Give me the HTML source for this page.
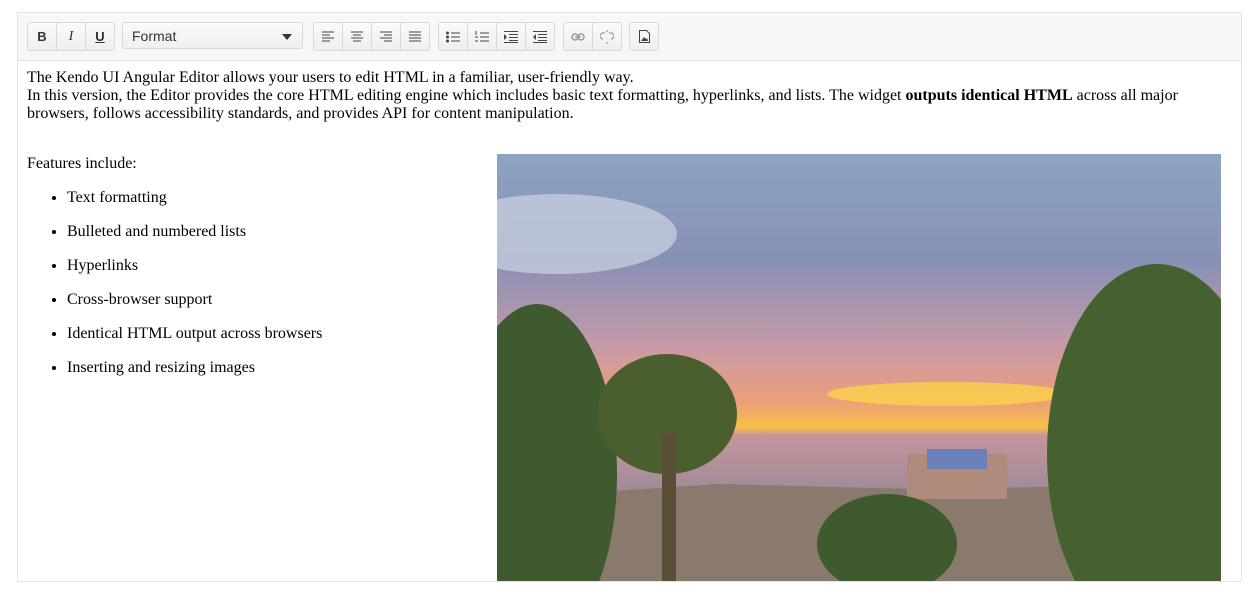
<!DOCTYPE html>
<html><head><meta charset="utf-8"><style>
html,body{margin:0;padding:0;background:#fff;width:1258px;height:596px;overflow:hidden}
.ed{position:absolute;left:17px;top:12px;width:1223px;height:568px;border:1px solid #e3e3e3;overflow:hidden}
.tb{position:absolute;left:0;top:0;width:1223px;height:47px;background:#f7f7f7;border-bottom:1px solid #e3e3e3}
.g{position:absolute;top:9px;height:27px;border:1px solid #d8d8d8;border-radius:3px;background:linear-gradient(#fafafa,#efefef);display:flex}
.g span{width:28px;height:27px;border-right:1px solid #d8d8d8;display:flex;align-items:center;justify-content:center;font:bold 13px "Liberation Sans",sans-serif;color:#333}
.g span:last-child{border-right:none}
.fmt{position:absolute;left:104px;top:9px;width:181px;height:27px;border:1px solid #d8d8d8;border-radius:3px;background:linear-gradient(#fafafa,#efefef);font:14px "Liberation Sans",sans-serif;color:#333;line-height:27px;padding-left:9px;box-sizing:border-box}
.fmt:after{content:"";position:absolute;right:10px;top:11px;border:5px solid transparent;border-top:6px solid #333;border-bottom:none}
.ct{position:absolute;left:9px;top:56px;font:16px "Liberation Serif",serif;color:#000;line-height:18px}
ul{margin:16px 0 0 0;padding-left:40px}
li{height:34px;line-height:18px}
.img{position:absolute;left:479px;top:141px;width:724px;height:427px}
</style></head><body>
<div class="ed">
<div class="tb">
 <div class="g" style="left:9px"><span>B</span><span style="font:italic 14px 'Liberation Serif',serif">I</span><span style="text-decoration:underline">U</span></div>
 <div class="fmt">Format</div>
 <div class="g" style="left:295px">
  <span><svg width="12" height="11"><path d="M0 1h12M0 4h8M0 7h12M0 10h8" stroke="#444"/></svg></span>
  <span><svg width="12" height="11"><path d="M0 1h12M2 4h8M0 7h12M2 10h8" stroke="#444"/></svg></span>
  <span><svg width="12" height="11"><path d="M0 1h12M4 4h8M0 7h12M4 10h8" stroke="#444"/></svg></span>
  <span><svg width="12" height="11"><path d="M0 1h12M0 4h12M0 7h12M0 10h12" stroke="#444"/></svg></span>
 </div>
 <div class="g" style="left:420px">
  <span><svg width="14" height="12"><circle cx="1.5" cy="2" r="1.5" fill="#444"/><circle cx="1.5" cy="6" r="1.5" fill="#444"/><circle cx="1.5" cy="10" r="1.5" fill="#444"/><path d="M5 2h9M5 6h9M5 10h9" stroke="#444"/></svg></span>
  <span><svg width="14" height="12"><path d="M1 0v4M0 6h3M0 10h3M5 2h9M5 6h9M5 10h9" stroke="#444"/></svg></span>
  <span><svg width="14" height="12"><path d="M0 3l3 3-3 3z" fill="#444"/><path d="M0 .5h14M5 3.5h9M5 6.5h9M5 9.5h9M0 11.5h14" stroke="#444"/></svg></span>
  <span><svg width="14" height="12"><path d="M3 3L0 6l3 3z" fill="#444"/><path d="M0 .5h14M5 3.5h9M5 6.5h9M5 9.5h9M0 11.5h14" stroke="#444"/></svg></span>
 </div>
 <div class="g" style="left:545px">
  <span><svg width="14" height="8"><rect x="1" y="1" width="6" height="6" rx="3" fill="none" stroke="#999" stroke-width="1.5"/><rect x="7" y="1" width="6" height="6" rx="3" fill="none" stroke="#999" stroke-width="1.5"/><path d="M4 4h6" stroke="#999" stroke-width="1.5"/></svg></span>
  <span><svg width="14" height="14"><path d="M5 3H3a3 3 0 000 6M9 3h2a3 3 0 010 6M7 0v2M7 12v2" stroke="#aaa" fill="none" stroke-width="1.5"/></svg></span>
 </div>
 <div class="g" style="left:611px"><span><svg width="11" height="13"><path d="M.5.5h7l3 3v9H.5z" fill="none" stroke="#444"/><path d="M2 11l3-4 2 2 1-1 1 3z" fill="#444"/></svg></span></div>
</div>
<div class="ct">The Kendo UI Angular Editor allows your users to edit HTML in a familiar, user-friendly way.<br>In this version, the Editor provides the core HTML editing engine which includes basic text formatting, hyperlinks, and lists. The widget <b>outputs identical HTML</b> across all major<br>browsers, follows accessibility standards, and provides API for content manipulation.
<div style="height:32px"></div>
<div style="height:18px">Features include:</div>
<ul><li>Text formatting</li><li>Bulleted and numbered lists</li><li>Hyperlinks</li><li>Cross-browser support</li><li>Identical HTML output across browsers</li><li>Inserting and resizing images</li></ul>
</div>
<svg class="img" viewBox="0 0 724 427" preserveAspectRatio="none">
<defs>
<linearGradient id="sk" x1="0" y1="0" x2="0" y2="1">
<stop offset="0" stop-color="#8ea3c2"/><stop offset=".25" stop-color="#8791b6"/><stop offset=".45" stop-color="#c79aa8"/><stop offset=".58" stop-color="#ec9e7a"/><stop offset=".64" stop-color="#f7c046"/><stop offset=".66" stop-color="#c4959c"/><stop offset=".8" stop-color="#9e8a98"/><stop offset="1" stop-color="#9e8a98"/>
</linearGradient>
</defs>
<rect width="724" height="427" fill="url(#sk)"/>
<ellipse cx="60" cy="80" rx="120" ry="40" fill="#d9dde8" opacity=".6"/>
<ellipse cx="450" cy="240" rx="120" ry="12" fill="#fbd24a" opacity=".8"/>
<path d="M0 345 L220 330 L420 335 L724 330 V427 H0Z" fill="#8a7a6e"/>
<rect x="410" y="300" width="100" height="45" fill="#b08a7a"/>
<rect x="430" y="295" width="60" height="20" fill="#6a80b8"/>
<ellipse cx="40" cy="320" rx="80" ry="170" fill="#3e5a2e"/>
<ellipse cx="660" cy="300" rx="110" ry="190" fill="#44612f"/>
<ellipse cx="170" cy="260" rx="70" ry="60" fill="#4a5e2e"/>
<rect x="165" y="280" width="14" height="147" fill="#5a4e36"/>
<ellipse cx="390" cy="390" rx="70" ry="50" fill="#3e5a2e"/>
</svg>
</div>
</body></html>
